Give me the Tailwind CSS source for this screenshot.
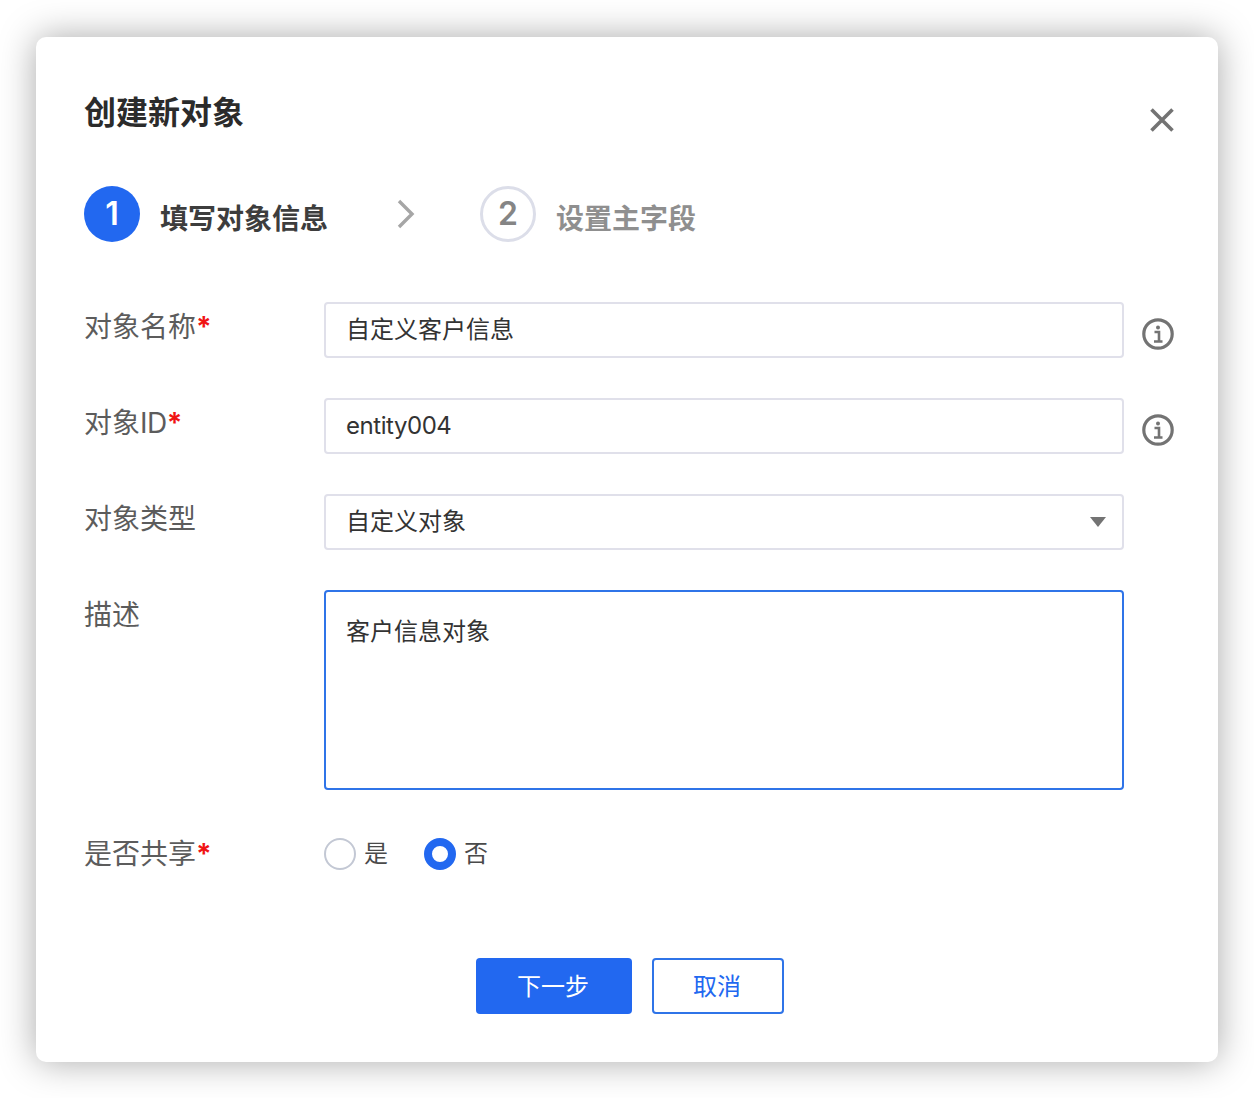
<!DOCTYPE html>
<html lang="zh-CN">
<head>
    <meta charset="UTF-8">
    <title>创建新对象</title>
    <script src="https://cdn.jsdelivr.net/npm/@tailwindcss/browser@4"></script>
</head>
<body class="bg-white w-[1254px] h-[1098px] overflow-hidden font-['Inter','Noto_Sans_CJK_SC',sans-serif]">
<div class="relative ml-[36px] mt-[37px] w-[1182px] h-[1025px] bg-white rounded-[10px] shadow-[0_0_36px_rgba(0,0,0,0.34)] pl-[48px] pt-[54px]">
    <h1 class="text-[32px] leading-[44px] font-bold text-[#2b2b2b]">创建新对象</h1>
    <!-- close -->
    <svg class="absolute right-[44px] top-[71px] w-[24px] h-[24px] text-[#737373]" viewBox="0 0 24 24" fill="none" stroke="currentColor" stroke-width="3.6">
        <path d="M1.5 1.5L22.5 22.5M22.5 1.5L1.5 22.5"/>
    </svg>

    <!-- steps -->
    <div class="flex items-center mt-[51px] h-[56px]">
        <span class="w-[56px] h-[56px] rounded-full bg-[#2268f0] text-white text-[32px] font-semibold flex items-center justify-center pb-[1px]">1</span>
        <span class="ml-[20px] w-[168px] text-[28px] font-bold text-[#3d3d3d] pt-[9px]">填写对象信息</span>
        <svg class="ml-[68px] w-[20px] h-[32px] text-[#a6a6a6] -mt-[1px]" viewBox="0 0 20 32" fill="none" stroke="currentColor" stroke-width="3.4">
            <path d="M3 3L16 16L3 29"/>
        </svg>
        <span class="ml-[64px] w-[56px] h-[56px] rounded-full border-[3px] border-[#dcdee9] text-[#858585] text-[32px] font-semibold flex items-center justify-center pb-[1px]">2</span>
        <span class="ml-[20px] text-[28px] font-bold text-[#8f8f8f] pt-[9px]">设置主字段</span>
    </div>

    <!-- form -->
    <div class="flex flex-col gap-[40px] mt-[60px] w-[1100px]">
        <div class="flex h-[56px]">
            <label class="shrink-0 w-[240px] text-[28px] leading-[50px] text-[#5c5c5c]">对象名称<span class="text-[#f01414] font-bold">*</span></label>
            <input type="text" value="自定义客户信息" class="shrink-0 w-[800px] h-[56px] border-2 border-[#e0e0ea] rounded-[4px] px-[20px] pb-[5px] text-[24px] text-[#333333] outline-none">
            <svg class="ml-[18px] mt-[16px] shrink-0 w-[32px] h-[32px] text-[#737373]" viewBox="0 0 32 32" fill="none" stroke="currentColor">
                <circle cx="16" cy="16" r="14.2" stroke-width="3.2"/>
                <circle cx="16" cy="9.5" r="2" fill="currentColor" stroke="none"/>
                <path d="M12.5 14H17V23M12 23.5H20.5" stroke-width="2.6"/>
            </svg>
        </div>
        <div class="flex h-[56px]">
            <label class="shrink-0 w-[240px] text-[28px] leading-[50px] text-[#5c5c5c]">对象<span class="tracking-[-0.5px]">ID</span><span class="text-[#f01414] font-bold">*</span></label>
            <input type="text" value="entity004" class="shrink-0 w-[800px] h-[56px] border-2 border-[#e0e0ea] rounded-[4px] px-[20px] pb-[2px] text-[24px] tracking-[-0.45px] text-[#333333] outline-none">
            <svg class="ml-[18px] mt-[16px] shrink-0 w-[32px] h-[32px] text-[#737373]" viewBox="0 0 32 32" fill="none" stroke="currentColor">
                <circle cx="16" cy="16" r="14.2" stroke-width="3.2"/>
                <circle cx="16" cy="9.5" r="2" fill="currentColor" stroke="none"/>
                <path d="M12.5 14H17V23M12 23.5H20.5" stroke-width="2.6"/>
            </svg>
        </div>
        <div class="flex h-[56px]">
            <label class="shrink-0 w-[240px] text-[28px] leading-[50px] text-[#5c5c5c]">对象类型</label>
            <div class="w-[800px] h-[56px] border-2 border-[#e0e0ea] rounded-[4px] pl-[20px] pr-[16px] flex items-center justify-between text-[24px] text-[#333333]">
                <span>自定义对象</span>
                <svg class="w-[16px] h-[10px] text-[#737373]" viewBox="0 0 16 10" fill="currentColor"><path d="M0 0H16L8 10Z"/></svg>
            </div>
        </div>
        <div class="flex h-[200px]">
            <label class="shrink-0 w-[240px] text-[28px] leading-[50px] text-[#5c5c5c]">描述</label>
            <textarea class="w-[800px] h-[200px] border-2 border-[#2f74e8] rounded-[4px] px-[20px] pt-[22px] text-[24px] leading-[36px] text-[#333333] outline-none resize-none">客户信息对象</textarea>
        </div>
        <div class="flex h-[46px] mt-[1px]">
            <label class="shrink-0 w-[240px] text-[28px] leading-[46px] text-[#5c5c5c]">是否共享<span class="text-[#f01414] font-bold">*</span></label>
            <div class="flex items-center gap-[8px] h-[46px] text-[24px] text-[#4a4a4a]">
                <span class="w-[32px] h-[32px] rounded-full border-2 border-[#c3c8d4]"></span>
                <span>是</span>
                <span class="ml-[28px] w-[32px] h-[32px] rounded-full border-[8px] border-[#2268f0]"></span>
                <span>否</span>
            </div>
        </div>
    </div>

    <!-- footer -->
    <div class="absolute left-[440px] top-[921px] flex gap-[20px]">
        <button class="w-[156px] h-[56px] rounded-[4px] bg-[#2268f0] text-white text-[24px] pt-[2px] pr-[2px]">下一步</button>
        <button class="w-[132px] h-[56px] rounded-[4px] border-2 border-[#2f74e8] bg-white text-[#2268f0] text-[24px] pt-[2px] pr-[2px]">取消</button>
    </div>
</div>
</body>
</html>
